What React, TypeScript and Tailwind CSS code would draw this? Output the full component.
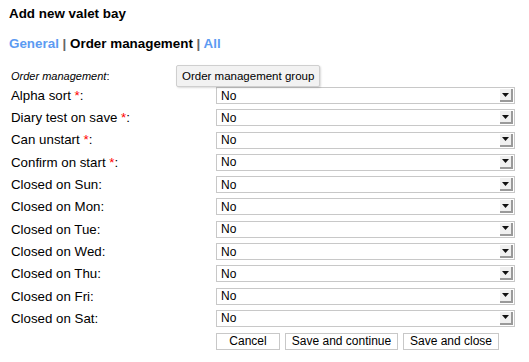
const rows: { label: string; req?: boolean }[] = [
  { label: "Alpha sort", req: true },
  { label: "Diary test on save", req: true },
  { label: "Can unstart", req: true },
  { label: "Confirm on start", req: true },
  { label: "Closed on Sun" },
  { label: "Closed on Mon" },
  { label: "Closed on Tue" },
  { label: "Closed on Wed" },
  { label: "Closed on Thu" },
  { label: "Closed on Fri" },
  { label: "Closed on Sat" },
];

function SelectBox() {
  return (
    <div className="flex h-[17px] w-[299px] items-center border border-[#c8c8c8] bg-white">
      <span className="flex-1 pl-[4px] text-[12px] leading-none text-black">No</span>
      <div className="mr-[1px] flex h-[13px] w-[13px] items-center justify-center border-r-2 border-b-2 border-[#9a9a9a] bg-[#f0f0f0]">
        <svg width="7" height="4" viewBox="0 0 7 4">
          <path d="M0 0h7L3.5 4z" fill="#111" />
        </svg>
      </div>
    </div>
  );
}

export default function App() {
  return (
    <div className="relative h-[362px] w-[529px] bg-white font-['Liberation_Sans',Arial,sans-serif] text-black">
      <div className="pl-[9px] pt-[6px] text-[13.4px] font-bold leading-[16px]">Add new valet bay</div>
      <div className="mt-[14px] pl-[9px] text-[13.4px] font-bold leading-[16px]">
        <span className="text-[#5c9bf2]">General</span>
        <span className="text-[#666]"> | </span>
        <span>Order management</span>
        <span className="text-[#666]"> | </span>
        <span className="text-[#5c9bf2]">All</span>
      </div>

      <div className="mt-[18px] pl-[11px] text-[11px] leading-[13px]">
        <i>Order management</i>:
      </div>

      <div className="absolute left-[176px] top-[65px] rounded-[2px] border border-[#cfcfcf] bg-[#f2f2f2] px-[5px] py-[3px] text-[11.5px] leading-[14px] shadow-[1px_1px_2px_rgba(0,0,0,0.15)]">
        Order management group
      </div>

      <div className="mt-[4px] flex flex-col gap-[5.3px]">
        {rows.map((r) => (
          <div key={r.label} className="flex h-[17px] items-center">
            <div className="w-[216px] pl-[11px] text-[13.3px] leading-none">
              {r.label}
              {r.req && <span className="text-[#f00]"> *</span>}:
            </div>
            <SelectBox />
          </div>
        ))}
      </div>

      <div className="mt-[6px] flex gap-[5px] pl-[216px] text-[12px]">
        <button className="h-[17px] w-[64px] border border-[#c8c8c8] bg-white leading-none">Cancel</button>
        <button className="h-[17px] w-[113px] border border-[#c8c8c8] bg-white leading-none">Save and continue</button>
        <button className="h-[17px] w-[96px] border border-[#c8c8c8] bg-white leading-none">Save and close</button>
      </div>
    </div>
  );
}
